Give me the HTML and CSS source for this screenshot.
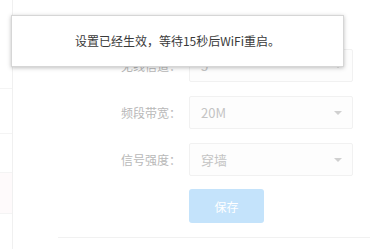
FILE: index.html
```html
<!DOCTYPE html>
<html lang="zh-CN">
<head>
    <meta charset="UTF-8">
    <meta name="viewport" content="width=device-width, initial-scale=1.0">
    <title>无线设置</title>
    <link rel="stylesheet" href="styles.css">
</head>
<body>
    <div class="page">
        <div class="side-nav">
            <div class="nav-item nav-a"></div>
            <div class="nav-item nav-b"></div>
            <div class="nav-item nav-c"></div>
            <div class="nav-item nav-d"></div>
        </div>
        <div class="main">
            <form class="wifi-form">
                <div class="form-row">
                    <label>无线信道：</label>
                    <div class="select-box">5<span class="arrow"></span></div>
                </div>
                <div class="form-row">
                    <label>频段带宽：</label>
                    <div class="select-box">20M<span class="arrow"></span></div>
                </div>
                <div class="form-row">
                    <label>信号强度：</label>
                    <div class="select-box">穿墙<span class="arrow"></span></div>
                </div>
                <div class="form-row">
                    <label></label>
                    <button type="button" class="save-btn">保存</button>
                </div>
            </form>
            <div class="footer-line"></div>
        </div>
    </div>

    <div class="toast">设置已经生效，等待15秒后WiFi重启。</div>
</body>
</html>
```

FILE: styles.css
```css
body {
    margin: 0;
    padding: 0;
    background-color: #fff;
    font-family: "Noto Sans CJK SC", "Microsoft YaHei", sans-serif;
    font-size: 12px;
    height: 249px;
    overflow: hidden;
}
.page {
    display: flex;
    height: 249px;
}
.side-nav {
    width: 12px;
    border-right: 1px solid #f0f0f0;
    padding-top: 88px;
}
.nav-item {
    border-top: 1px solid #f4f4f4;
}
.nav-a {
    height: 44px;
}
.nav-b {
    height: 38px;
}
.nav-c {
    height: 40px;
    background-color: #fefafb;
}
.nav-d {
    height: 0;
}
.main {
    flex: 1;
}
.wifi-form {
    padding-top: 49px;
}
.form-row {
    display: flex;
    align-items: center;
    margin-bottom: 14px;
}
.form-row label {
    width: 168px;
    margin-right: 8px;
    text-align: right;
    color: #b8b8b8;
    font-size: 12px;
}
.select-box {
    position: relative;
    box-sizing: border-box;
    width: 164px;
    height: 33px;
    line-height: 31px;
    padding-left: 11px;
    border: 1px solid #f1f1f1;
    border-radius: 2px;
    background-color: #fdfdfd;
    color: #c4c4c4;
    font-size: 13px;
}
.arrow {
    position: absolute;
    right: 10px;
    top: 14px;
    width: 0;
    height: 0;
    border-left: 4px solid transparent;
    border-right: 4px solid transparent;
    border-top: 4px solid #d0d0d0;
}
.save-btn {
    width: 75px;
    height: 34px;
    margin-top: -1px;
    border: none;
    border-radius: 3px;
    background-color: #c4e3fb;
    color: #fff;
    font-family: inherit;
    font-size: 12px;
    cursor: pointer;
}
.footer-line {
    margin-left: 45px;
    margin-top: 1px;
    border-top: 1px solid #f1f1f1;
}
.toast {
    position: absolute;
    left: 11px;
    top: 15px;
    box-sizing: border-box;
    width: 333px;
    height: 52px;
    line-height: 50px;
    border: 1px solid #d6d6d6;
    background-color: #fff;
    box-shadow: 0 1px 4px rgba(0, 0, 0, 0.25);
    text-align: center;
    color: #3a3a3a;
    font-size: 12px;
}
```
